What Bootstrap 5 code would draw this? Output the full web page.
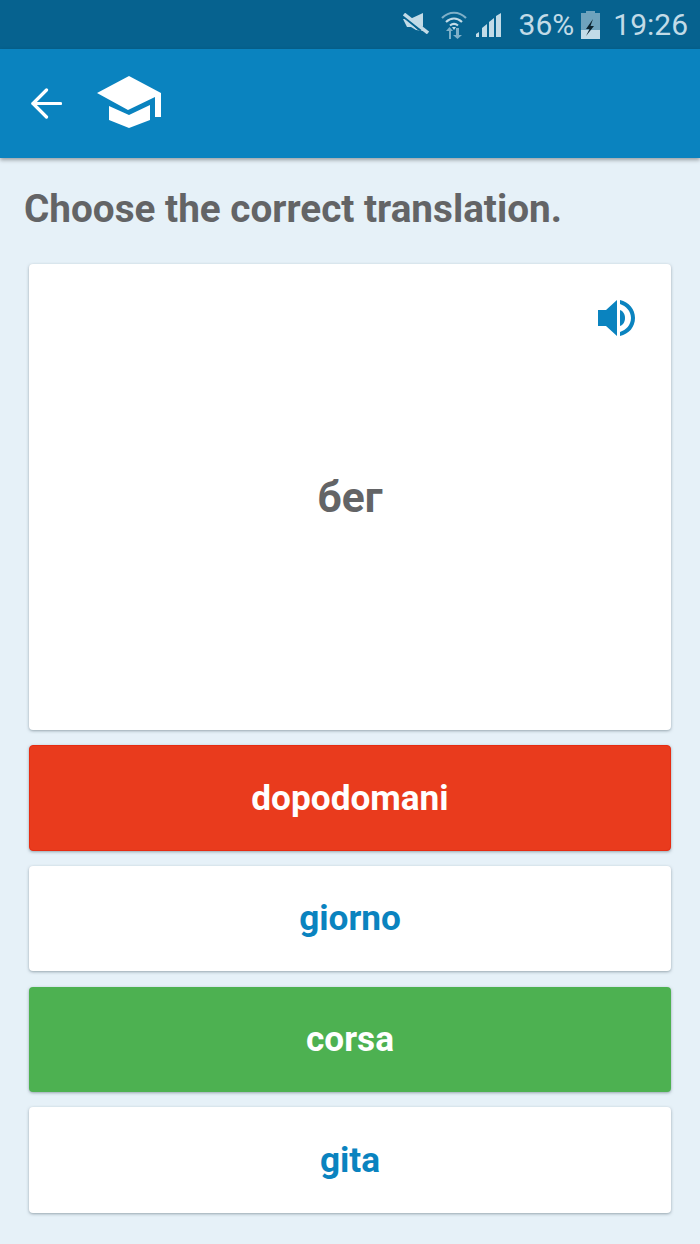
<!DOCTYPE html>
<html lang="en">
<head>
<meta charset="UTF-8">
<meta name="viewport" content="width=device-width, initial-scale=1.0">
<title>Choose the correct translation</title>
<link href="https://cdn.jsdelivr.net/npm/bootstrap@5.3.3/dist/css/bootstrap.min.css" rel="stylesheet">
<style>
  html, body { height: 100%; }
  body { background: #e6f1f8; font-family: Roboto, "Liberation Sans", sans-serif; overflow: hidden; }
  .status-strip { height: 49px; background: #06628f; color: #c2dbe7; font-size: 30px; line-height: 49px; padding-right: 12px; }
  .status-strip svg { display: block; }
  .status-mute { margin-right: 12px; margin-top: -2px; }
  .status-wifi { margin-right: 9px; }
  .status-signal { margin-right: 18px; }
  .status-batt { margin: 0 13px 0 7px; }
  .app-bar { height: 109px; background: #0a83bf; padding-left: 31px; box-shadow: 0 2px 4px rgba(0,0,0,.35); position: relative; }
  .bar-cap { margin-left: 35px; margin-top: -3px; }
  .prompt { font-size: 38.7px; font-weight: 700; color: #636466; line-height: 42px; margin: 30px 0 34px 24px; }
  .quiz { padding: 0 29px; gap: 15.2px; }
  .word-card { height: 466px; background: #fff; border-radius: 4px; box-shadow: 0 1px 3px rgba(70,90,100,.5); position: relative; }
  .word-card span { font-size: 42.5px; font-weight: 700; color: #636466; margin-top: 2px; }
  .sound-btn { position: absolute; top: 36px; right: 35px; }
  .answer { height: 105.5px; border-radius: 4px; font-size: 35.2px; font-weight: 700; box-shadow: 0 1px 3px rgba(70,90,100,.5); background: #fff; color: #0a83bf; }
  .answer-wrong, .answer-wrong:hover { background: #e93b1d; color: #fff; border: 1px solid #e62c12; }
  .answer-right { background: #4db151; color: #fff; }
</style>
</head>
<body>
  <div class="status-strip d-flex justify-content-end align-items-center">
    <svg class="status-mute" width="26" height="21" viewBox="0 0 26 21"><path d="M7 6L20 0v14zM0 6h3l12 11 5 0v1l-7-1-5-3H4z" fill="#c2dbe7"/><path d="M1 1l24 19" stroke="#c2dbe7" stroke-width="3.400"/><path d="M0 4l19 15" stroke="#06628f" stroke-width="1.200"/></svg>
    <svg class="status-wifi" width="26" height="28" viewBox="0 0 26 28"><g fill="none" stroke="#7fb0c8" stroke-width="2.200"><path d="M1 7c7-7 17-7 24 0"/></g><g fill="none" stroke="#c2dbe7" stroke-width="2.200"><path d="M5 11c5-4.500 11-4.500 16 0"/><path d="M9 14.500c2.500-2 5.500-2 8 0"/></g><path d="M11 16h4l-2 3z" fill="#c2dbe7"/><path d="M8 20h-3l3.500-4 3.500 4h-2v8H8zM15 17h3v7h3l-4.500 4-4.500-4h3z" fill="#7fb0c8"/></svg>
    <svg class="status-signal" width="25" height="24" viewBox="0 0 25 24"><path d="M0 24v-3l3-2v5zM6 24v-9l5-4v13zM13 24V9l5-4v19zM20 24V3l5-3v24z" fill="#c2dbe7"/></svg>
    <span>36%</span>
    <svg class="status-batt" width="19" height="28" viewBox="0 0 19 28"><path d="M5 0h9v2h5v17H0V2h5z" fill="#6fa3bd"/><path d="M0 19h19v9H0z" fill="#c2dbe7"/><path d="M12 8L5 18h3.500L5 25l8-10H9.500z" fill="#0c2430"/></svg>
    <span>19:26</span>
  </div>

  <div class="app-bar d-flex align-items-center">
    <svg width="31" height="31" viewBox="0 0 31 31" fill="none" stroke="#fff" stroke-width="3.200" stroke-linecap="round" stroke-linejoin="round"><path d="M2 15.500h27.500"/><path d="M15.500 2L2 15.500 15.500 29"/></svg>
    <svg class="bar-cap" width="64" height="52" viewBox="0 0 64 52" fill="#fff"><path d="M32 0L0 17l31 17 27-13v20h6V17z"/><path d="M12 30v14l20 8 21-8V29L32 39z"/></svg>
  </div>

  <h1 class="prompt">Choose the correct translation.</h1>

  <div class="quiz d-flex flex-column">
    <div class="word-card d-flex align-items-center justify-content-center">
      <span>бег</span>
      <svg class="sound-btn" width="38" height="36" viewBox="0 0 38 36" fill="#0a83bf"><path d="M0 10h8L19 0v36L8 26H0z"/><path d="M22 10c3 1 5 4 5 8s-2 7-5 8z"/><path d="M22 0c9 2 15 9 15 18s-6 16-15 18v-4c6-2 11-7 11-14S28 6 22 4z"/></svg>
    </div>
    <button class="btn answer answer-wrong">dopodomani</button>
    <button class="btn answer">giorno</button>
    <button class="btn answer answer-right">corsa</button>
    <button class="btn answer">gita</button>
  </div>
</body>
</html>
